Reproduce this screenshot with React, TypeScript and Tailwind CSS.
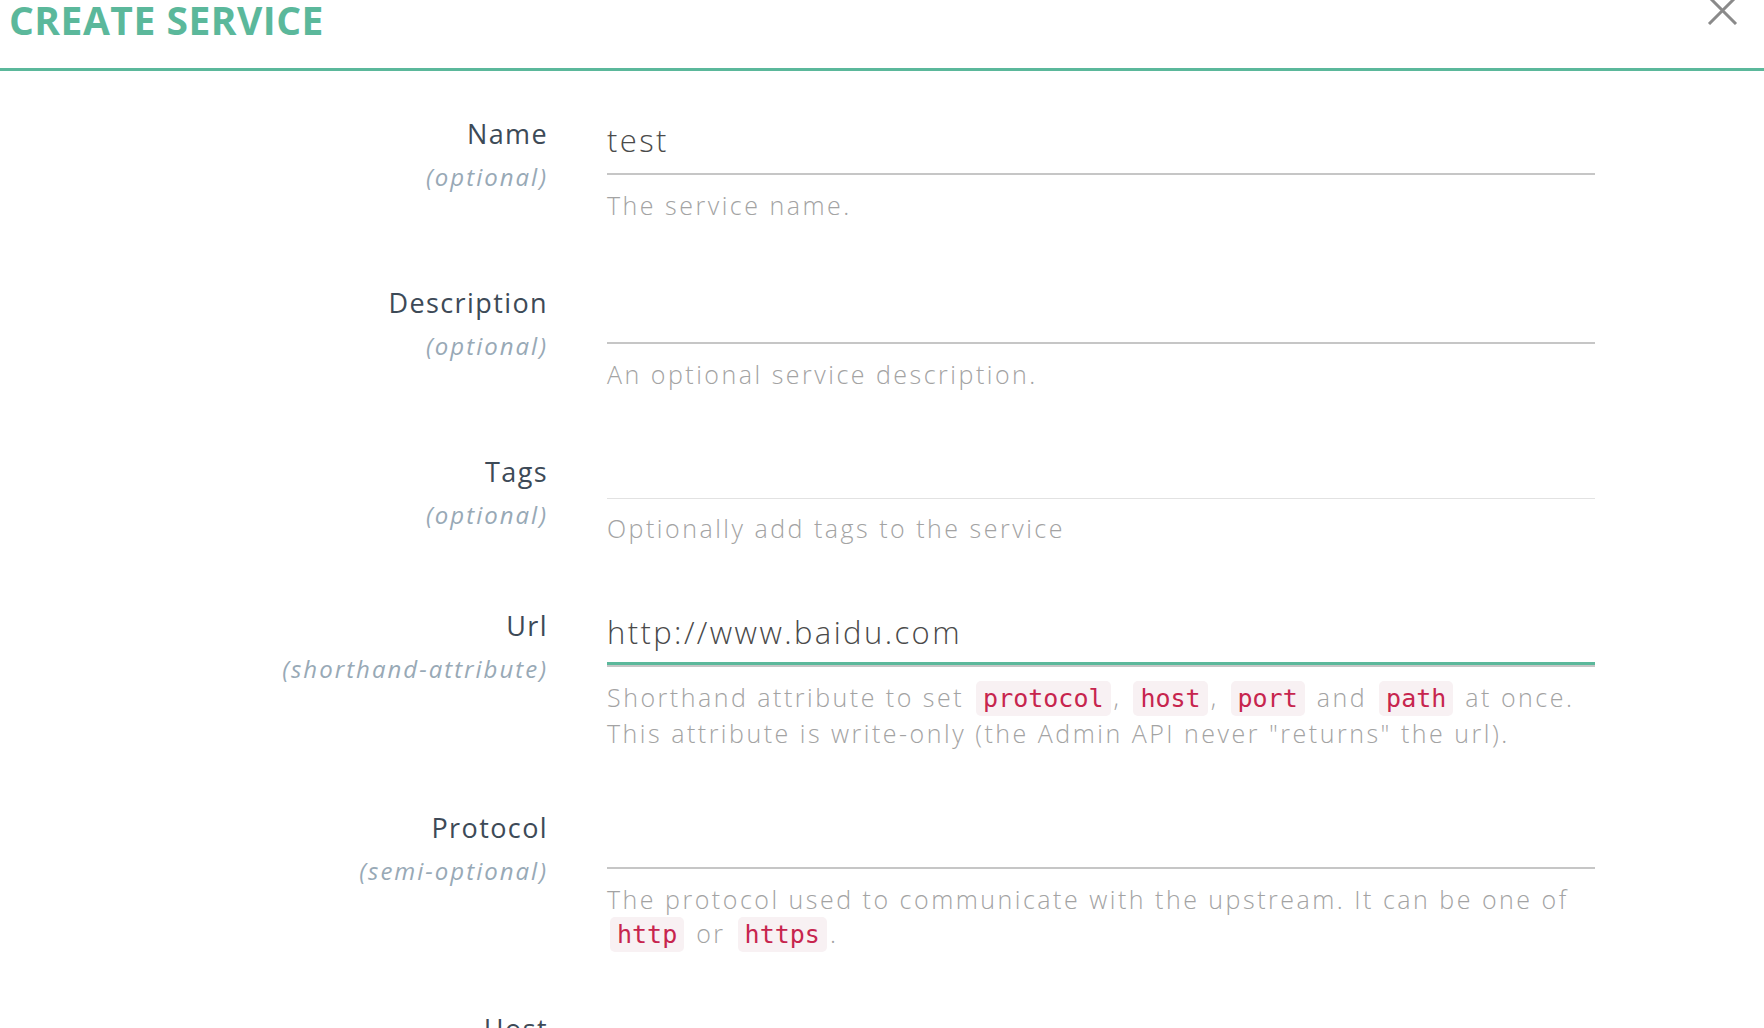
const body = { fontFamily: '"Open Sans", "Noto Sans", sans-serif' };
const mono = { fontFamily: '"DejaVu Sans Mono", "Liberation Mono", monospace' };

function Code({ children }: { children: React.ReactNode }) {
  return (
    <code
      style={mono}
      className="mx-[3px] rounded-[5px] bg-[#f8f1f3] px-[7px] py-[3px] text-[25px] tracking-normal text-[#c7254e]"
    >
      {children}
    </code>
  );
}

interface RowProps {
  label: string;
  hint: string;
  value?: string;
  focused?: boolean;
  tags?: boolean;
  children: React.ReactNode;
}

function Row({ label, hint, value, focused, tags, children }: RowProps) {
  return (
    <div className="flex items-start pb-[63px]">
      <div className="w-[548px] shrink-0 text-right">
        <div className="text-[27px] font-medium leading-[36px] tracking-[1.4px] text-[#3d4a57]">{label}</div>
        <div className="mt-[7px] text-[24px] italic leading-[36px] tracking-[2px] text-[#98a9b6]">{hint}</div>
      </div>
      <div className="ml-[59px] w-[988px]">
        {tags ? (
          <div className="h-[45px] border-b border-[#e2e2e2]" />
        ) : (
          <>
            <div
              className={
                focused
                  ? "h-[57px] border-b-[3px] border-[#5bb89b] pt-[4px] text-[31px] font-light leading-[40px] tracking-[2.4px] text-[#4a4a4a]"
                  : "h-[57px] pt-[4px] text-[31px] font-light leading-[40px] tracking-[2.4px] text-[#4a4a4a]"
              }
            >
              {value}
            </div>
            <div className="h-[2px] bg-[#c6c6c6]" />
          </>
        )}
        <div
          className={
            tags
              ? "mt-[12px] text-[25px] font-light leading-[34px] tracking-[2.5px] text-[#a3a3a3]"
              : "mt-[13px] text-[25px] font-light leading-[34px] tracking-[2.5px] text-[#a3a3a3]"
          }
        >
          {children}
        </div>
      </div>
    </div>
  );
}

export default function App() {
  return (
    <div style={body} className="h-[1028px] w-[1764px] overflow-hidden bg-white">
      <div className="flex h-[71px] items-start justify-between border-b-[3px] border-[#5bb89b]">
        <h1 className="pl-[9px] text-[39px] font-bold leading-[40px] tracking-[0.5px] text-[#5bb89b]">CREATE SERVICE</h1>
        <svg width="32" height="28" viewBox="0 0 32 28" className="mr-[26px] -mt-[3px]">
          <path d="M3 0 L30 27 M30 0 L3 27" stroke="#8a8a8a" strokeWidth="3" fill="none" />
        </svg>
      </div>

      <div className="pt-[45px]">
        <Row label="Name" hint="(optional)" value="test">
          The service name.
        </Row>
        <Row label="Description" hint="(optional)">
          An optional service description.
        </Row>
        <Row label="Tags" hint="(optional)" tags>
          Optionally add tags to the service
        </Row>
        <div className="-mb-[3px]">
          <Row label="Url" hint="(shorthand-attribute)" value="http://www.baidu.com" focused>
            Shorthand attribute to set <Code>protocol</Code>, <Code>host</Code>, <Code>port</Code> and <Code>path</Code> at once.
            <br />
            This attribute is write-only (the Admin API never "returns" the url).
          </Row>
        </div>
        <div className="-mb-[4px]">
          <Row label="Protocol" hint="(semi-optional)">
            The protocol used to communicate with the upstream. It can be one of
            <br />
            <Code>http</Code> or <Code>https</Code>.
          </Row>
        </div>
        <Row label="Host" hint="(semi-optional)">
          The host of the upstream server.
        </Row>
      </div>
    </div>
  );
}
